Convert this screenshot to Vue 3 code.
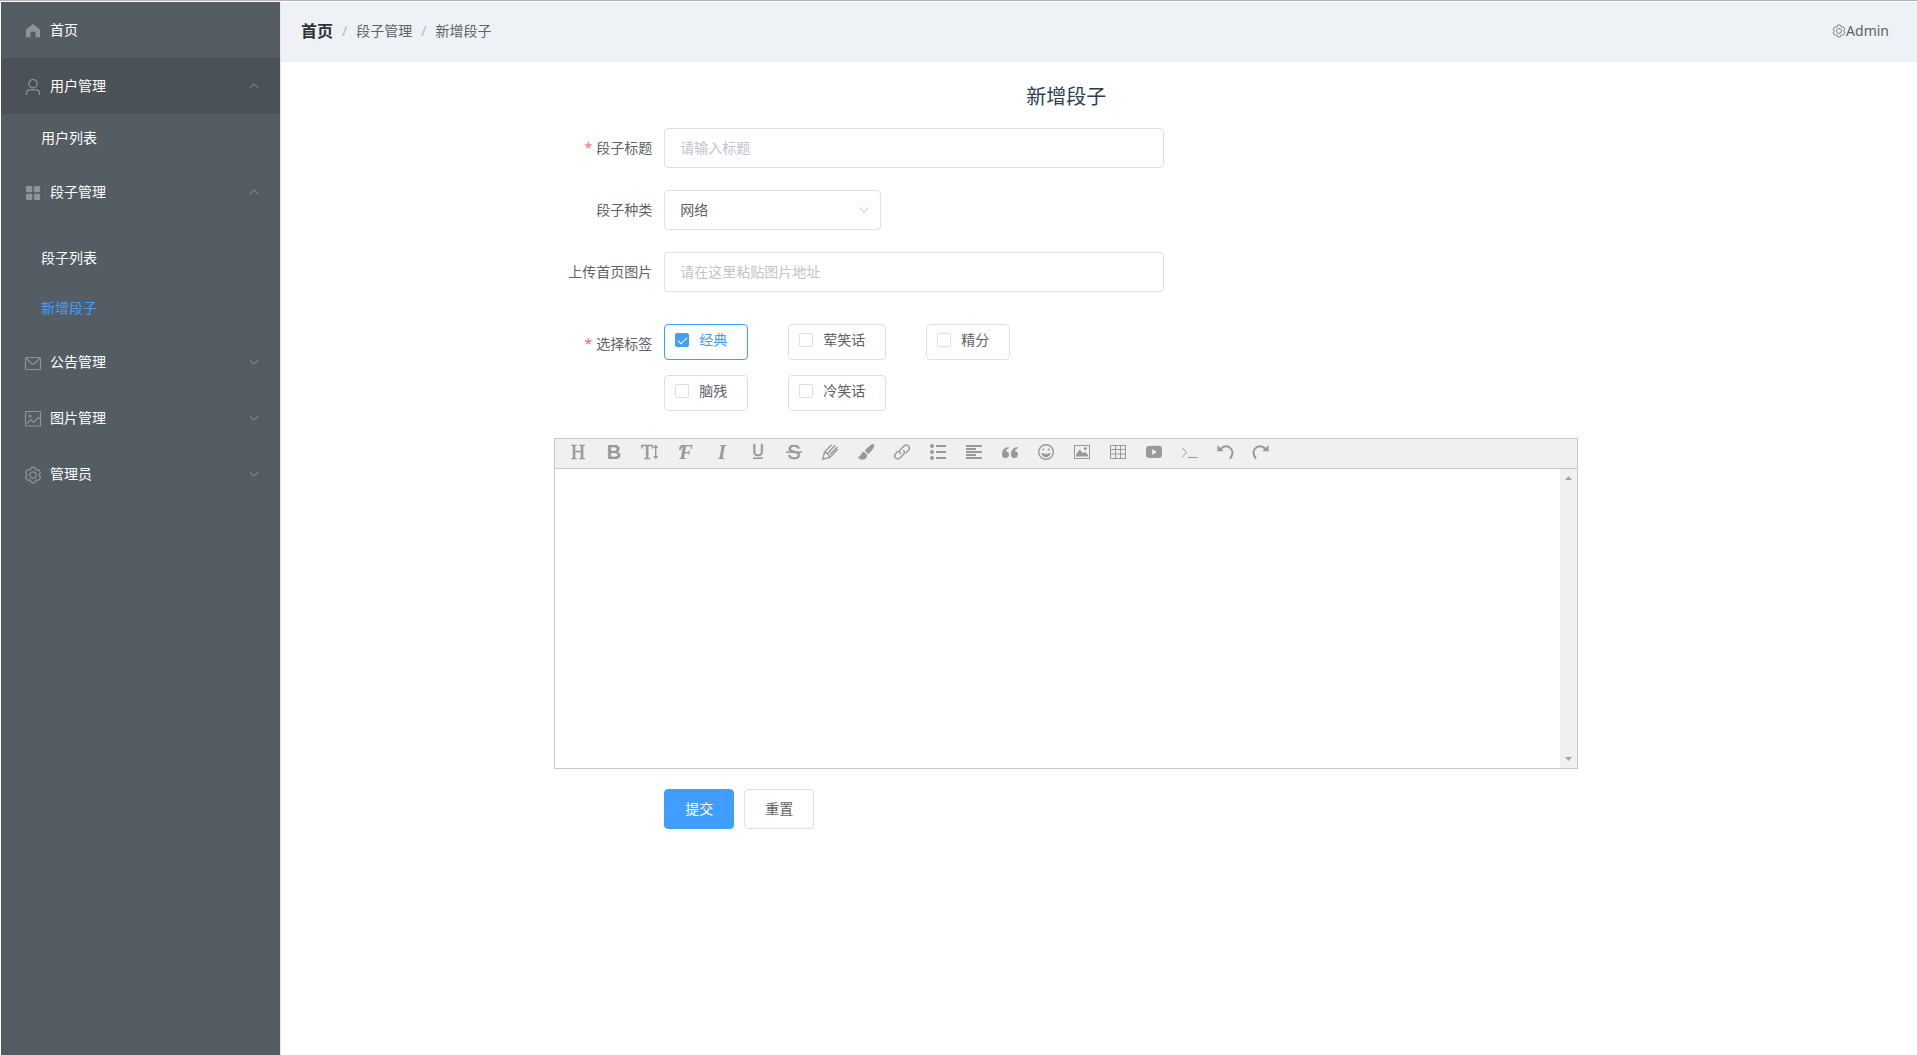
<script setup>
import { ref } from 'vue'

const menu = [
  { title: '首页', icon: 'home' },
  { title: '用户管理', icon: 'user', open: true, hover: true, children: ['用户列表'] },
  { title: '段子管理', icon: 'menu', open: true, grouped: true, children: ['段子列表', '新增段子'] },
  { title: '公告管理', icon: 'message', open: false },
  { title: '图片管理', icon: 'picture', open: false },
  { title: '管理员', icon: 'setting', open: false }
]
const current = '新增段子'

const gear =
  'M7.4 1.4 H10.6 L11.9 3.9 L14.8 3.9 L16.5 6.7 L15 9 L16.5 11.3 L14.8 14.1 L11.9 14.1 L10.6 16.6 H7.4 L6.1 14.1 L3.2 14.1 L1.5 11.3 L3 9 L1.5 6.7 L3.2 3.9 L6.1 3.9 Z'

const title = ref('')
const kind = ref('网络')
const image = ref('')
const content = ref('')
const tags = ['经典', '荤笑话', '精分', '脑残', '冷笑话']
const picked = ref(['经典'])

const tools = [
  'head', 'bold', 'size', 'font', 'italic', 'underline', 'strike', 'color', 'brush', 'link',
  'list', 'align', 'quote', 'emoji', 'image', 'table', 'video', 'code', 'undo', 'redo'
]

function reset() {
  title.value = ''
  kind.value = '网络'
  image.value = ''
  content.value = ''
  picked.value = []
}
</script>

<template>
  <div class="layout">
    <nav class="sidebar">
      <div v-for="item in menu" :key="item.title">
        <a href="#" class="menu-title" :class="{ hover: item.hover }">
          <svg class="menu-icon" viewBox="0 0 18 18" aria-hidden="true">
            <path v-if="item.icon === 'home'" class="solid" d="M9 2 L16 7.6 V15.2 H11.5 V10.6 Q11.5 9.8 10.7 9.8 H7.3 Q6.5 9.8 6.5 10.6 V15.2 H2 V7.6 Z" />
            <g v-else-if="item.icon === 'user'">
              <circle cx="9" cy="5.7" r="4.2" />
              <path d="M2.5 17 V15.3 Q2.5 11.9 6 11.9 H12 Q15.5 11.9 15.5 15.3 V17" />
            </g>
            <g v-else-if="item.icon === 'menu'" class="solid">
              <rect x="2" y="2" width="6.3" height="6.3" rx="1" />
              <rect x="9.8" y="2" width="6.3" height="6.3" rx="1" />
              <rect x="2" y="9.8" width="6.3" height="6.3" rx="1" />
              <rect x="9.8" y="9.8" width="6.3" height="6.3" rx="1" />
            </g>
            <g v-else-if="item.icon === 'message'">
              <rect x="1.5" y="3.5" width="15" height="12" rx="1" />
              <path d="M2 4 L6.8 9 Q9 10.8 11.2 9 L16 4" />
            </g>
            <g v-else-if="item.icon === 'picture'">
              <rect x="1.5" y="1.5" width="15" height="14.5" rx="0.6" />
              <circle cx="6" cy="6" r="1" />
              <path d="M3 13.5 L6.6 9.6 L9.8 12.4 L14.2 7.4 L16 9" />
            </g>
            <g v-else>
              <path :d="gear" />
              <circle cx="9" cy="9" r="3.2" />
            </g>
          </svg>
          <span>{{ item.title }}</span>
          <svg v-if="item.open !== undefined" class="arrow" viewBox="0 0 12 12" aria-hidden="true">
            <path :d="item.open ? 'M1.8 8 L6 3.8 L10.2 8' : 'M1.8 3.8 L6 8 L10.2 3.8'" />
          </svg>
        </a>
        <div v-if="item.children" :class="{ grouped: item.grouped }">
          <a v-for="child in item.children" :key="child" href="#" class="sub-item" :class="{ active: child === current }">{{ child }}</a>
        </div>
      </div>
    </nav>

    <div class="page">
      <header class="topbar">
        <div class="crumbs">
          <a href="#" class="crumb-home">首页</a><span class="sep">/</span><span>段子管理</span><span class="sep">/</span><span>新增段子</span>
        </div>
        <a href="#" class="admin">
          <svg viewBox="0 0 18 18" aria-hidden="true">
            <path :d="gear" />
            <circle cx="9" cy="9" r="3.2" />
          </svg><span>Admin</span>
        </a>
      </header>

      <main class="content">
        <h1>新增段子</h1>
        <form @submit.prevent @reset.prevent="reset">
          <div class="row">
            <label for="title" class="label required">段子标题</label>
            <input id="title" v-model="title" type="text" class="field" placeholder="请输入标题" />
          </div>
          <div class="row">
            <label for="kind" class="label">段子种类</label>
            <div class="select">
              <select id="kind" v-model="kind" class="field">
                <option>网络</option>
              </select>
              <svg class="caret" viewBox="0 0 14 14" aria-hidden="true"><path d="M2.4 4.4 L7 9.6 L11.6 4.4" /></svg>
            </div>
          </div>
          <div class="row">
            <label for="image" class="label">上传首页图片</label>
            <input id="image" v-model="image" type="text" class="field" placeholder="请在这里粘贴图片地址" />
          </div>
          <div class="row tag-row" role="group" aria-labelledby="tags-label">
            <span id="tags-label" class="label required">选择标签</span>
            <div class="tags">
              <label v-for="tag in tags" :key="tag" class="tag" :class="{ checked: picked.includes(tag) }">
                <input v-model="picked" type="checkbox" :value="tag" />
                <span>{{ tag }}</span>
              </label>
            </div>
          </div>

          <div class="editor">
            <div class="toolbar">
              <button v-for="tool in tools" :key="tool" type="button" class="tool" :aria-label="tool">
                <svg viewBox="0 0 18 18" aria-hidden="true">
                  <text v-if="tool === 'head'" class="serif outline" x="9" y="16">H</text>
                  <text v-else-if="tool === 'bold'" class="sans bold" x="9" y="16">B</text>
                  <g v-else-if="tool === 'size'">
                    <text class="serif outline" x="6" y="16">T</text>
                    <path class="line" d="M14.7 4 V14" />
                    <path d="M14.7 1.6 L17.2 5 H12.2 Z M14.7 16.4 L17.2 13 H12.2 Z" />
                  </g>
                  <g v-else-if="tool === 'font'">
                    <text class="serif bold slanted" x="9" y="16">F</text>
                    <path class="line thick" d="M6 3 Q3 3 3 7" />
                  </g>
                  <text v-else-if="tool === 'italic'" class="serif bold slanted" x="9" y="16">I</text>
                  <g v-else-if="tool === 'underline'">
                    <text class="sans small outline" x="9" y="13">U</text>
                    <path d="M4 14.4 H14 V16 H4 Z" />
                  </g>
                  <g v-else-if="tool === 'strike'">
                    <text class="sans outline" x="9" y="16">S</text>
                    <path d="M1 8.4 H17 V9.9 H1 Z" />
                  </g>
                  <g v-else-if="tool === 'color'" class="line">
                    <path d="M10.6 1.8 L3.6 8.8 L1.8 16.2 L8.8 14.4 L16.8 6.2 M3.6 8.8 Q7.4 10.4 8.8 14.4 M7 10 L14.2 2.2 M9 11.6 L16.4 4" />
                  </g>
                  <g v-else-if="tool === 'brush'">
                    <path d="M17 1 Q18 2 16.2 5.2 Q14 9 11.2 11 L7.8 7.8 Q10.4 4.4 13.8 2 Q15.8 .6 17 1 Z" />
                    <path d="M7 8.8 L10.2 11.8 Q10 16.8 4.8 16.8 Q2 16.8 1 13.6 Q3 14.2 3.8 11.6 Q4.8 8.8 7 8.8 Z" />
                  </g>
                  <g v-else-if="tool === 'link'" class="line">
                    <path d="M7.6 11 Q5.4 8.6 7.6 6.4 L11 3 Q13.4 1 15.6 3.2 Q17.4 5.4 15.2 7.6 L12.6 10.2" />
                    <path d="M10.4 7 Q12.6 9.4 10.4 11.6 L7 15 Q4.6 17 2.4 14.8 Q.6 12.6 2.8 10.4 L5.4 7.8" />
                  </g>
                  <g v-else-if="tool === 'list'">
                    <circle cx="3" cy="3" r="2" /><circle cx="3" cy="9" r="2" /><circle cx="3" cy="15" r="2" />
                    <path d="M7 2 H17 V4 H7 Z M7 8 H17 V10 H7 Z M7 14 H17 V16 H7 Z" />
                  </g>
                  <path v-else-if="tool === 'align'" d="M1 2 H17 V4 H1 Z M1 5 H11 V7 H1 Z M1 8 H17 V10 H1 Z M1 11 H11 V13 H1 Z M1 14 H17 V16 H1 Z" />
                  <g v-else-if="tool === 'quote'">
                    <path d="M7.6 4 Q1 5 1 11.4 Q1 15 4.5 15 Q8 15 8 11.6 Q8 8.4 4.8 8.2 Q5.4 6 7.6 5.2 Z" />
                    <path d="M16.6 4 Q10 5 10 11.4 Q10 15 13.5 15 Q17 15 17 11.6 Q17 8.4 13.8 8.2 Q14.4 6 16.6 5.2 Z" />
                  </g>
                  <g v-else-if="tool === 'emoji'">
                    <circle class="line" cx="9" cy="9" r="7.3" />
                    <circle cx="6.3" cy="6.5" r="1.1" /><circle cx="11.7" cy="6.5" r="1.1" />
                    <path d="M4.2 9.8 Q9 12 13.8 9.8 Q12.8 14.2 9 14.2 Q5.2 14.2 4.2 9.8 Z" />
                  </g>
                  <g v-else-if="tool === 'image'">
                    <rect class="line thin" x="1.5" y="2.5" width="15" height="13" />
                    <path d="M3 13.6 V11.5 L6.6 6.4 L10 10.2 L12 8.8 L15 12 V13.6 Z" />
                    <circle cx="12.3" cy="5.6" r="1.5" />
                  </g>
                  <path v-else-if="tool === 'table'" class="line thin" d="M1.5 2.5 H16.5 V15.5 H1.5 Z M1.5 6.5 H16.5 M1.5 11 H16.5 M6.5 2.5 V15.5 M11.5 2.5 V15.5" />
                  <path v-else-if="tool === 'video'" fill-rule="evenodd" d="M3 3 Q9 2.6 15 3 Q17 3.2 17 6 V12 Q17 14.6 15 14.8 Q9 15.2 3 14.8 Q1 14.6 1 12 V6 Q1 3.2 3 3 Z M7.2 6 V12 L11.8 9 Z" />
                  <path v-else-if="tool === 'code'" class="line thin" d="M1.5 5 L5.5 9.5 L1.5 14 M7 14.5 H16.5" />
                  <g v-else :class="{ flip: tool === 'redo' }">
                    <path class="line thick" d="M3.4 6.2 Q7.4 1.8 12.4 4.2 Q18.4 8.6 13 15.8" />
                    <path d="M.4 2 V8.2 H6.8 Z" />
                  </g>
                </svg>
              </button>
            </div>
            <div class="editor-body">
              <textarea v-model="content" aria-label="段子内容"></textarea>
              <div class="scroll" aria-hidden="true">
                <svg viewBox="0 0 7 4"><path d="M0 4 L3.5 0 L7 4 Z" /></svg>
                <svg viewBox="0 0 7 4"><path d="M0 0 L3.5 4 L7 0 Z" /></svg>
              </div>
            </div>
          </div>

          <div class="actions">
            <button type="submit" class="btn primary">提交</button>
            <button type="reset" class="btn">重置</button>
          </div>
        </form>
      </main>
    </div>
  </div>
</template>

<style>
body {
  background: #fff;
}
</style>

<style scoped>
* {
  box-sizing: border-box;
}

.layout {
  display: flex;
  min-height: 100vh;
  padding: 1px 0 0 1px;
  border-top: 1px solid #b3b1b5;
  font: 14px/20px "Noto Sans", "Noto Sans CJK SC", sans-serif;
  color: #606266;
}

a {
  color: inherit;
  text-decoration: none;
}

button,
input,
select,
textarea {
  margin: 0;
  font: inherit;
  color: inherit;
}

.sidebar {
  flex: 0 0 280px;
  border-right: 1px solid #e6e6e6;
  background: #545c64;
  color: #fff;
}

.menu-title {
  display: flex;
  align-items: center;
  height: 56px;
  padding: 0 20px;
}

.menu-title.hover {
  background: #4a5157;
}

.menu-icon {
  width: 18px;
  height: 18px;
  margin: 2px 8px 0 3px;
  fill: none;
  stroke: #909399;
  stroke-width: 1.2;
}

.menu-icon .solid {
  fill: #909399;
  stroke: none;
}

.arrow {
  width: 12px;
  height: 12px;
  margin-left: auto;
  fill: none;
  stroke: #909399;
}

.grouped {
  padding-top: 14px;
}

.sub-item {
  display: block;
  height: 50px;
  padding-left: 40px;
  line-height: 48px;
}

.sub-item.active {
  color: #409eff;
}

.page {
  flex: 1;
  min-width: 0;
}

.topbar {
  display: flex;
  align-items: center;
  justify-content: space-between;
  height: 60px;
  padding: 0 28px 2px 20px;
  background: #eef1f6;
}

.crumbs {
  display: flex;
  align-items: center;
}

.crumb-home {
  font-size: 16px;
  font-weight: 700;
  color: #303133;
}

.sep {
  margin: 0 9px;
  color: #b4b8c0;
}

.admin {
  display: flex;
  align-items: center;
}

.admin svg {
  width: 14px;
  height: 14px;
  fill: none;
  stroke: #606266;
}

.content {
  width: 62.6%;
  margin-left: 16.7%;
  padding-top: 21px;
}

h1 {
  margin: 0 0 17px;
  font-size: 20px;
  font-weight: 400;
  line-height: 28px;
  text-align: center;
  color: #2c3e50;
}

.row {
  display: flex;
  margin-bottom: 22px;
}

.label {
  flex: 0 0 110px;
  padding-right: 12px;
  line-height: 40px;
  text-align: right;
}

.required::before {
  content: "*";
  margin-right: 4px;
  color: #f56c6c;
}

.field {
  width: 500px;
  height: 40px;
  padding: 0 15px 2px;
  border: 1px solid #dcdfe6;
  border-radius: 4px;
  background: #fff;
  outline: none;
}

.field::placeholder {
  color: #c0c4cc;
}

.select {
  position: relative;
  width: 217px;
}

.select .field {
  width: 100%;
  padding-bottom: 0;
  appearance: none;
}

.caret {
  position: absolute;
  top: 13px;
  right: 10px;
  width: 14px;
  height: 14px;
  fill: none;
  stroke: #c0c4cc;
  pointer-events: none;
}

.tag-row {
  padding: 10px 0 5px;
}

.tags {
  display: flex;
  flex-wrap: wrap;
  gap: 15px 40px;
  max-width: 400px;
}

.tag {
  display: flex;
  align-items: flex-start;
  gap: 10px;
  height: 36px;
  padding: 8px 20px 0 10px;
  border: 1px solid #dcdfe6;
  border-radius: 4px;
  line-height: 14px;
}

.tag.checked {
  border-color: #409eff;
  color: #409eff;
}

.tag input {
  position: relative;
  width: 14px;
  height: 14px;
  border: 1px solid #dcdfe6;
  border-radius: 2px;
  background: #fff;
  appearance: none;
}

.tag input:checked {
  border-color: #409eff;
  background: #409eff;
}

.tag input:checked::after {
  content: "";
  position: absolute;
  top: 1px;
  left: 4px;
  width: 4px;
  height: 8px;
  border: solid #fff;
  border-width: 0 1px 1px 0;
  transform: rotate(45deg);
}

.editor {
  border: 1px solid #c9c9c9;
}

.toolbar {
  display: flex;
  height: 30px;
  padding: 0 5px;
  border-bottom: 1px solid #c9c9c9;
  background: #f0f0f0;
}

.tool {
  display: flex;
  justify-content: center;
  width: 36px;
  padding: 4px 0 0;
  border: 0;
  background: none;
}

.tool svg {
  width: 18px;
  height: 18px;
  fill: #999;
  overflow: visible;
}

.tool text {
  font-size: 20px;
  text-anchor: middle;
}

.tool .serif {
  font-family: "Liberation Serif", serif;
}

.tool .sans {
  font-family: "Liberation Sans", sans-serif;
}

.tool .small {
  font-size: 16px;
}

.tool .bold {
  font-weight: 700;
}

.tool .slanted {
  font-style: italic;
}

.tool .outline {
  stroke: #999;
  stroke-width: 0.5;
}

.tool .line {
  fill: none;
  stroke: #999;
  stroke-width: 1.4;
}

.tool .thin {
  stroke-width: 1;
}

.tool .thick {
  stroke-width: 2;
}

.flip {
  transform: translateX(16px) scaleX(-1);
}

.editor-body {
  display: flex;
  height: 299px;
}

textarea {
  flex: 1;
  padding: 10px;
  border: 0;
  outline: none;
  resize: none;
}

.scroll {
  display: flex;
  flex-direction: column;
  align-items: center;
  justify-content: space-between;
  width: 17px;
  padding: 7px 0;
  background: #f0f0f0;
}

.scroll svg {
  width: 7px;
  height: 4px;
  fill: #a3a3a3;
}

.actions {
  display: flex;
  gap: 10px;
  padding: 20px 0 20px 110px;
}

.btn {
  width: 70px;
  height: 40px;
  padding: 0;
  border: 1px solid #dcdfe6;
  border-radius: 4px;
  background: #fff;
}

.btn.primary {
  border-color: #409eff;
  background: #409eff;
  color: #fff;
}
</style>
